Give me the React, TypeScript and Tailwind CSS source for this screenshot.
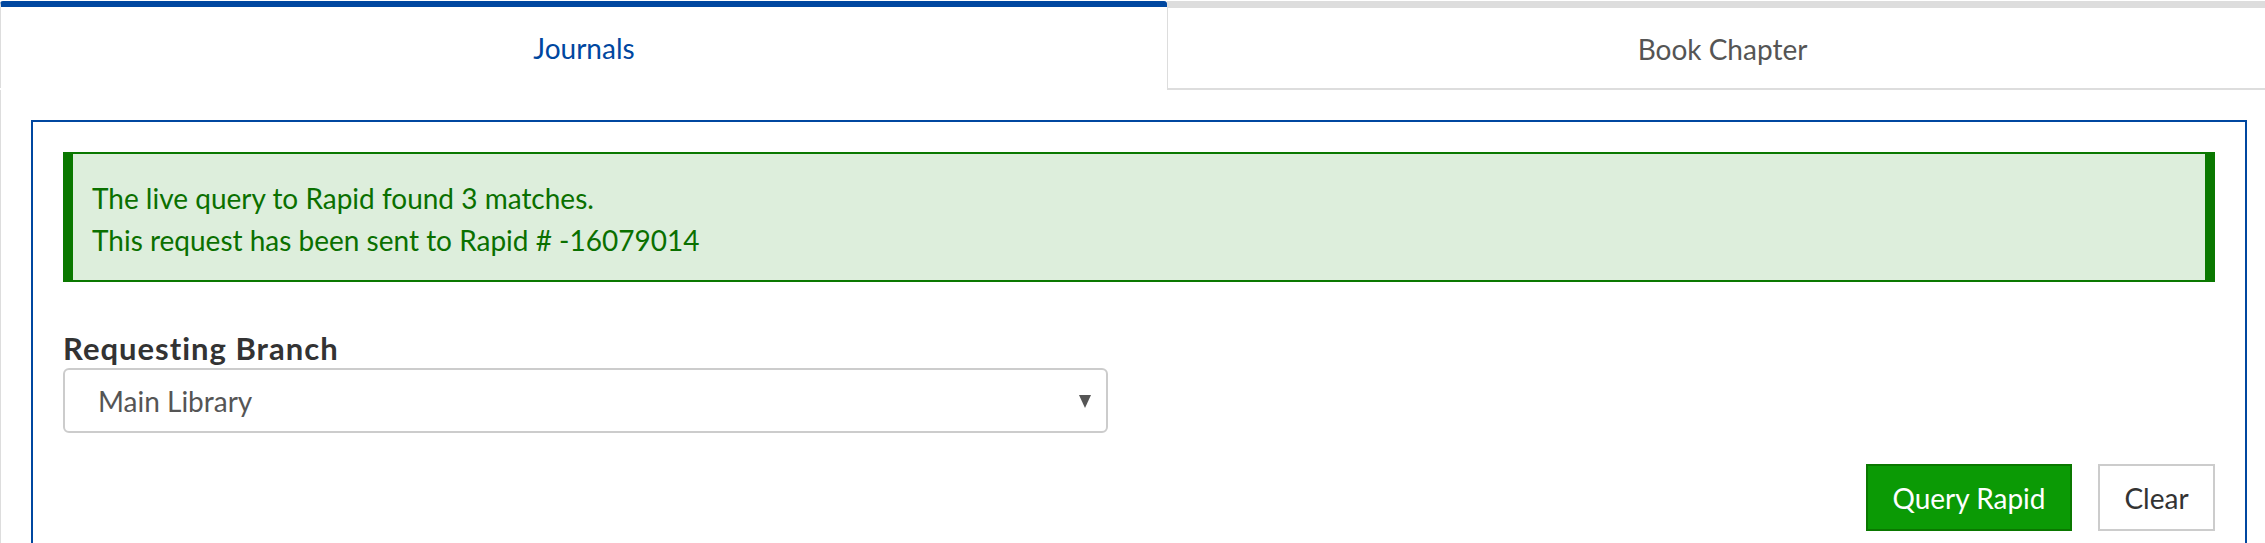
export default function App() {
  return (
    <div className="w-[2265px] h-[543px] overflow-hidden bg-white font-['Lato',sans-serif]">
      {/* Tabs */}
      <div className="flex pt-px">
        <div className="w-[1167px] h-[87px] shrink-0 border-t-[6px] border-l border-t-[#0047a0] border-l-[#dddddd] rounded-tl-[3px] rounded-tr-[3px] flex items-center justify-center pt-px text-[28px] text-[#0047a0]">
          Journals
        </div>
        <div className="w-[1110px] shrink-0 h-[89px] border-t-[7px] border-l border-b-2 border-[#dddddd] flex items-center justify-center pt-px text-[28px] text-[#555555]">
          Book Chapter
        </div>
      </div>

      {/* Tab content */}
      <div className="border-l border-[#dddddd] pl-[30px] pr-[18px] pt-[30px] h-[460px]">
        <div className="border-2 border-[#0047a0] p-[30px] pb-[40px]">
          {/* Alert */}
          <div className="bg-[#ddeedc] border-y-2 border-x-[10px] border-[#0a7800] px-[19px] pt-[23px] pb-[19px] text-[28px] leading-[42px] text-[#0a7000]">
            <p>The live query to Rapid found 3 matches.</p>
            <p>This request has been sent to Rapid # -16079014</p>
          </div>

          {/* Requesting branch */}
          <div className="mt-[48px]">
            <label className="block text-[31px] font-bold leading-[37px] tracking-[1px] text-[#333333]">
              Requesting Branch
            </label>
            <div className="mt-[1px] w-[1045px] h-[65px] border-2 border-[#cccccc] rounded-[6px] flex items-center justify-between pl-[33px] pr-[14px] text-[28px] text-[#555555]">
              <span>Main Library</span>
              <svg width="14" height="16" viewBox="0 0 14 16" className="fill-[#555555]">
                <path d="M1 2h12L7 15z" />
              </svg>
            </div>
          </div>

          {/* Actions */}
          <div className="mt-[31px] flex justify-end gap-[26px]">
            <button className="w-[206px] h-[67px] bg-[#0b9a05] border-2 border-[#0a7800] text-white text-[28px]">
              Query Rapid
            </button>
            <button className="w-[117px] h-[67px] bg-white border-2 border-[#cccccc] text-[#333333] text-[28px]">
              Clear
            </button>
          </div>
        </div>
      </div>
    </div>
  );
}
